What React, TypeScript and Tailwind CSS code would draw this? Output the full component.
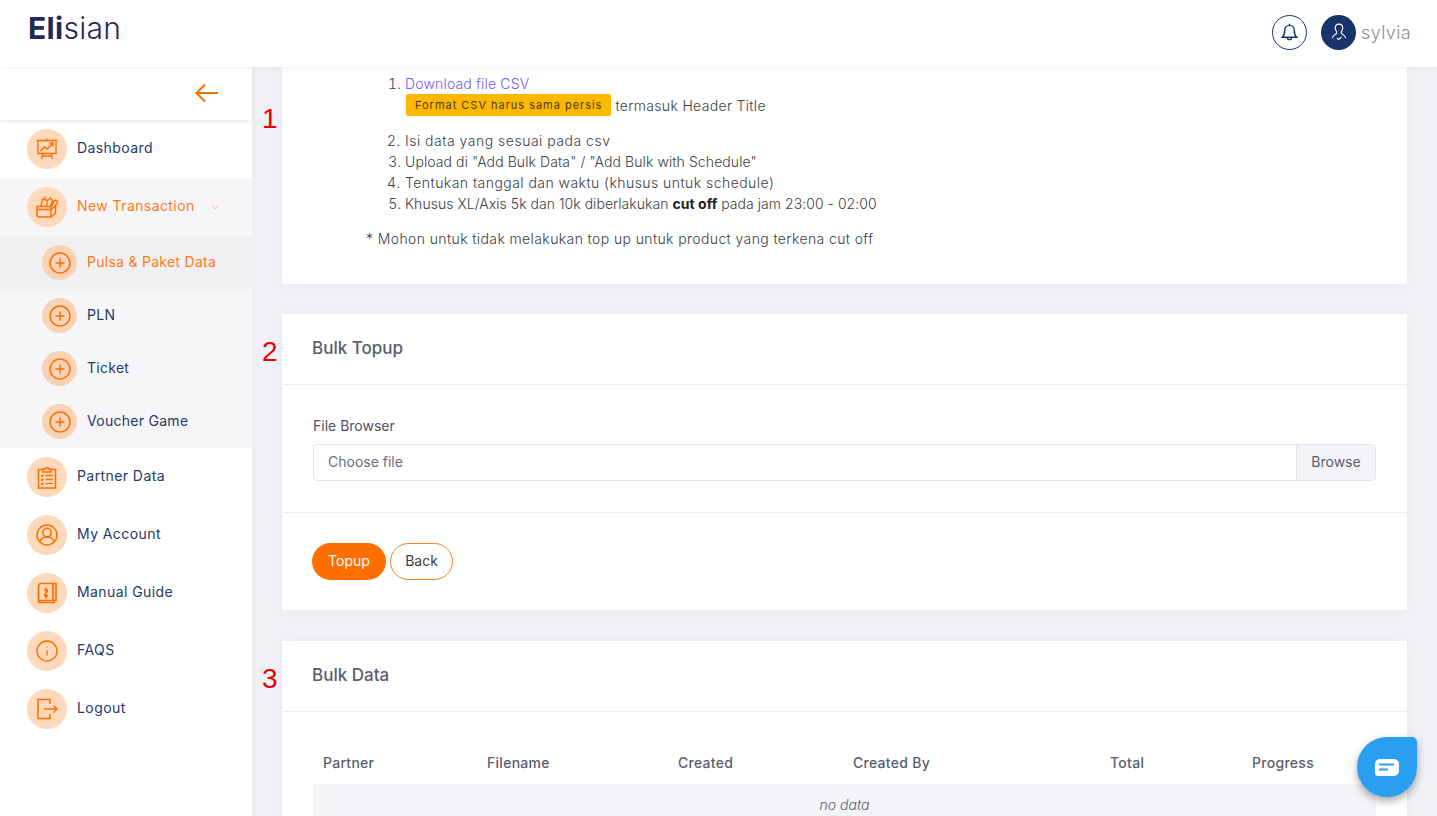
import { ChevronDown, CirclePlus, Info } from 'lucide-react';
import type { ReactNode } from 'react';

/* ---------- icons ---------- */

const ORANGE = '#ff6f00';

function Ico({ children, size = 24 }: { children: ReactNode; size?: number }) {
  return (
    <svg width={size} height={size} viewBox="0 0 24 24" fill="none" stroke={ORANGE} strokeWidth={1.4}>
      {children}
    </svg>
  );
}

const DashIcon = (
  <Ico>
    <path d="M1.500 3.500h21M3 3.500v13h18v-13M12 3.500V1.500M8 16.500l-1.500 5.500M16 16.500l1.500 5.500M7.300 19h9.400" />
    <path d="M5.500 14l4-4 3 2 5-5.500M14.500 6h3.500v3.500" strokeWidth={1.6} />
  </Ico>
);
const BoxIcon = (
  <Ico>
    <path d="M2 11.500h14v10.500H4a2 2 0 0 1-2-2zM16 14.500l4.500-3.500v7.500L16 22M2 14.500h14" strokeWidth={1.5} />
    <path d="M6 11.500L7.500 4l5 1.500-1 6M12.500 5.500l3-2.500 2 2.500-2 6M17 11l2-5c1.500-1.500 4-.5 3.500 1.500L20 11" />
    <path d="M9 1.500l2 2" />
  </Ico>
);
const ClipboardIcon = (
  <Ico>
    <path d="M8 4.500H3.500v18.500h17V4.500H16" strokeWidth={1.6} />
    <path d="M8 7V4h2.500a1.500 1.500 0 0 1 3 0H16v3z" strokeWidth={1.4} />
    <path d="M6 10.500l1 1 1.500-2M6 14.500l1 1 1.500-2M6 18.500l1 1 1.500-2M10.500 10.500H18M10.500 14.500H18M10.500 18.500H18" />
  </Ico>
);
const AccountIcon = (
  <Ico>
    <circle cx="12" cy="12" r="10" strokeWidth={1.5} />
    <circle cx="12" cy="9.500" r="4.200" strokeWidth={1.5} />
    <path d="M4.800 18.500c1.200-3 4-4.500 7.200-4.500s6 1.500 7.200 4.500" strokeWidth={1.5} />
  </Ico>
);
const BookIcon = (
  <Ico>
    <path d="M6 2.500h15v17H5.500A2 2 0 0 0 3.500 21.500V5a2.500 2.500 0 0 1 2.500-2.500z" strokeWidth={1.7} />
    <path d="M3.500 21.500h15.500v-2M18 2.500v17" strokeWidth={1.7} />
    <path d="M11 6.500v11.500M9.500 10c0-2 3-2 3 0s-3 2-3 4 3 2 3 0" />
  </Ico>
);
const LogoutIcon = (
  <Ico>
    <path d="M15 7V2.500H3v19h12V17" strokeWidth={1.6} />
    <path d="M9 12h13M18.500 8.500L22 12l-3.500 3.500" strokeWidth={1.4} />
  </Ico>
);

/* ---------- sidebar ---------- */

function NavItem({ icon, label, active, chevron }: { icon: ReactNode; label: string; active?: boolean; chevron?: boolean }) {
  return (
    <div className={`flex h-[58px] items-center pl-[27px] ${active ? 'bg-[#f6f6f8]' : ''}`}>
      <span className="flex h-10 w-10 items-center justify-center rounded-full bg-[#ffd9bb]">{icon}</span>
      <span className={`ml-[10px] pb-[4px] text-[14px] font-normal tracking-[0.03em] ${active ? 'text-[#ff7a1a]' : 'text-[#233a6b]'}`}>{label}</span>
      {chevron && <ChevronDown size={11} strokeWidth={1.4} className="ml-[15px] mt-[1px] text-[#ff7a1a]" />}
    </div>
  );
}

function SubItem({ label, active }: { label: string; active?: boolean }) {
  return (
    <div className={`flex h-[53px] items-center pl-[42px] ${active ? 'bg-[#f0f0f2]' : ''}`}>
      <span className="flex h-[35px] w-[35px] items-center justify-center rounded-full bg-[#f8d3b6]">
        <CirclePlus size={24} strokeWidth={1.5} color={ORANGE} />
      </span>
      <span className={`ml-[10px] pb-[2px] text-[14px] tracking-[0.02em] ${active ? 'text-[#ff7a1a]' : 'text-[#233a6b]'}`}>{label}</span>
    </div>
  );
}

function Sidebar() {
  return (
    <aside className="w-[252px] shrink-0 bg-white shadow-[0_0_8px_rgba(82,63,105,0.05)]">
      <div className="mt-[1px] flex h-[52px] items-center justify-end pb-[3px] pr-[33px] shadow-[0_2px_4px_rgba(0,0,0,0.08)]">
        <svg width="24" height="20" viewBox="0 0 24 20" fill="none" stroke={ORANGE} strokeWidth={2}>
          <path d="M23 10H2M10 1.500L1.500 10l8.500 8.500" />
        </svg>
      </div>
      <NavItem icon={DashIcon} label="Dashboard" />
      <NavItem icon={BoxIcon} label="New Transaction" active chevron />
      <div className="bg-[#f6f6f8]">
        <SubItem label="Pulsa & Paket Data" active />
        <SubItem label="PLN" />
        <SubItem label="Ticket" />
        <SubItem label="Voucher Game" />
      </div>
      <NavItem icon={ClipboardIcon} label="Partner Data" />
      <NavItem icon={AccountIcon} label="My Account" />
      <NavItem icon={BookIcon} label="Manual Guide" />
      <NavItem icon={<Info size={24} strokeWidth={1.4} color={ORANGE} />} label="FAQS" />
      <NavItem icon={LogoutIcon} label="Logout" />
    </aside>
  );
}

/* ---------- cards ---------- */

const MARK = "absolute left-[-20px] font-['Liberation_Sans',sans-serif] text-[28px] leading-none text-[#f00000]";
const CARD = 'relative bg-white shadow-[0_0_13px_rgba(82,63,105,0.05)]';

function CardHead({ title, mark }: { title: string; mark: ReactNode }) {
  return (
    <div className="flex h-[71px] items-center border-b border-[#ebedf2] pl-[30px]">
      {mark}
      <h3 className="text-[17px] font-medium text-[#595d6e]">{title}</h3>
    </div>
  );
}

const COLUMNS = [
  { label: 'Partner', w: 'w-[164px]' },
  { label: 'Filename', w: 'w-[191px]' },
  { label: 'Created', w: 'w-[175px]' },
  { label: 'Created By', w: 'w-[257px]' },
  { label: 'Total', w: 'w-[142px]' },
  { label: 'Progress', w: 'w-[134px]' },
];

export default function App() {
  return (
    <div className="flex h-[816px] w-[1437px] flex-col overflow-hidden bg-[#f0f1f7] font-['Inter',sans-serif] text-[14px] text-[#595d6e]">
      {/* ---- header ---- */}
      <header className="relative z-10 flex h-[67px] shrink-0 items-center justify-between bg-white pl-[28px] pr-[26px] shadow-[0_0_6px_rgba(0,0,0,0.08)]">
        <div className="-mt-[12px] text-[30px] leading-none tracking-[0.01em] text-[#1f2a55]">
          <span className="font-bold">Eli</span>
          <span className="font-light">sian</span>
        </div>
        <div className="-mt-[3px] flex items-center">
          <span className="flex h-[35px] w-[35px] items-center justify-center rounded-full border border-[#17356b]">
            <svg width="19" height="19" viewBox="0 0 24 24" fill="none" stroke="#17356b" strokeWidth={1.8}>
              <path d="M12 3a6 6 0 0 0-6 6c0 6-2 8-3 9h18c-1-1-3-3-3-9a6 6 0 0 0-6-6zM12 1v2M9.500 18.500a2.500 2.500 0 0 0 5 0" />
            </svg>
          </span>
          <span className="ml-[14px] flex h-[35px] w-[35px] items-center justify-center rounded-full bg-[#17356b]">
            <svg width="20" height="20" viewBox="0 0 24 24" fill="none" stroke="#fff" strokeWidth={1.3}>
              <path d="M12 2.500c-2.800 0-4.500 2-4.500 4.800 0 2 .8 3.500 1.800 4.500.5 1.500-.3 2.500-1.800 3.200-1.500.7-3 1.500-3.500 4.500M12 2.500c2.800 0 4.500 2 4.500 4.800 0 2-.8 3.500-1.800 4.500-.5 1.500.3 2.500 1.800 3.200 1.500.7 3 1.500 3.500 4.500" />
              <path d="M9.500 19.500l2 1.500 3.500-3" />
            </svg>
          </span>
          <span className="ml-[5px] text-[18px] font-light tracking-[0.02em] text-[#8d8d99]">sylvia</span>
        </div>
      </header>

      <div className="flex min-h-0 flex-1">
        <Sidebar />

        <main className="flex min-w-0 flex-1 flex-col overflow-hidden px-[30px]">
          {/* ---- instructions ---- */}
          <section className={`${CARD} shrink-0 pb-[35px] pl-[84px] pt-[6px] font-light leading-[21px] tracking-[0.17px] text-[#3d3d45]`}>
            <span className={`${MARK} top-[38px]`}>1</span>
            <ol className="list-decimal pl-[39px]">
              <li className="mb-[14px]">
                <a className="text-[#6f5bf0]">Download file CSV</a>
                <div className="flex items-center">
                  <span className="ml-[1px] rounded-[2px] bg-[#ffb800] px-[9px] py-[3px] text-[11px] font-normal leading-[16px] tracking-[0.98px] text-[#4d3a06]">
                    Format CSV harus sama persis
                  </span>
                  <span className="ml-[4px] tracking-[0.33px]">termasuk Header Title</span>
                </div>
              </li>
              <li className="tracking-[0.5px]">Isi data yang sesuai pada csv</li>
              <li className="tracking-[0.09px]">Upload di "Add Bulk Data" / "Add Bulk with Schedule"</li>
              <li className="tracking-[0.45px]">Tentukan tanggal dan waktu (khusus untuk schedule)</li>
              <li className="tracking-[0.04px]">
                Khusus XL/Axis 5k dan 10k diberlakukan <b className="font-bold text-[#1f1f26]">cut off</b> pada jam 23:00 - 02:00
              </li>
            </ol>
            <p className="mt-[14px] tracking-[0.39px]">* Mohon untuk tidak melakukan top up untuk product yang terkena cut off</p>
          </section>

          {/* ---- bulk topup ---- */}
          <section className={`${CARD} mt-[30px] shrink-0`}>
            <CardHead title="Bulk Topup" mark={<span className={`${MARK} top-[24px]`}>2</span>} />
            <div className="border-b border-[#ebedf2] px-[31px] pb-[31px] pt-[30px]">
              <label className="block leading-[21px] text-[#4f5260]">File Browser</label>
              <div className="mt-[8px] flex h-[37px] items-stretch overflow-hidden rounded-[4px] border border-[#e2e5ec]">
                <span className="flex flex-1 items-center pb-[2px] pl-[14px] text-[#6c6e7a]">Choose file</span>
                <span className="flex w-[79px] items-center justify-center border-l border-[#e2e5ec] bg-[#f3f4f8] pb-[2px] text-[#595d6e]">Browse</span>
              </div>
            </div>
            <div className="flex gap-[4px] px-[30px] py-[30px]">
              <button className="h-[37px] w-[74px] rounded-full bg-[#ff6f00] pb-[2px] text-white">Topup</button>
              <button className="h-[37px] w-[63px] rounded-full border border-[#ff7f24] pb-[2px] text-[#3b3d48]">Back</button>
            </div>
          </section>

          {/* ---- bulk data ---- */}
          <section className={`${CARD} mt-[31px] shrink-0`}>
            <CardHead title="Bulk Data" mark={<span className={`${MARK} top-[24px]`}>3</span>} />
            <div className="px-[31px] pt-[30px]">
              <table className="w-full table-fixed">
                <thead>
                  <tr>
                    {COLUMNS.map((c) => (
                      <th key={c.label} className={`${c.w} h-[42px] pb-[2px] pl-[10px] text-left font-medium tracking-[0.02em] text-[#595d6e]`}>
                        {c.label}
                      </th>
                    ))}
                  </tr>
                </thead>
                <tbody>
                  <tr className="bg-[#f3f4f8]">
                    <td colSpan={6} className="h-[42px] pb-[2px] text-center font-light italic text-[#595d6e]">
                      no data
                    </td>
                  </tr>
                </tbody>
              </table>
            </div>
          </section>
        </main>
      </div>

      {/* ---- chat launcher ---- */}
      <button className="fixed bottom-[19px] right-[20px] flex h-[60px] w-[60px] items-center justify-center rounded-[50%_5px_50%_50%] bg-[#2a9ff2] shadow-[0_4px_8px_rgba(0,0,0,0.35)]">
        <svg width="24" height="17" viewBox="0 0 24 17">
          <path d="M5 0h14a5 5 0 0 1 5 5v7a5 5 0 0 1-5 5H3a3 3 0 0 1-3-3V5a5 5 0 0 1 5-5z" fill="#fff" />
          <path d="M4 5.500h15M4 10.500h9" stroke="#2a9ff2" strokeWidth={2} />
        </svg>
      </button>
    </div>
  );
}
